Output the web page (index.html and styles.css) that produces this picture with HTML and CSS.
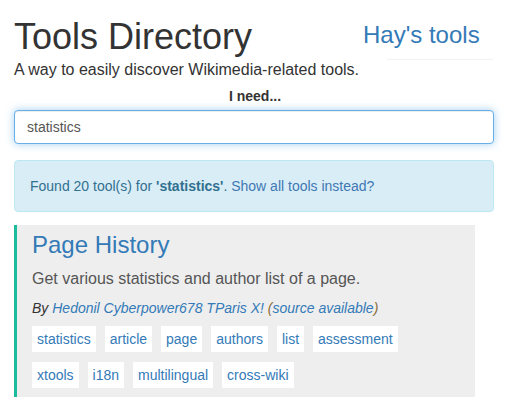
FILE: index.html
```html
<!DOCTYPE html>
<html lang="en">
<head>
<meta charset="utf-8">
<title>Tools Directory</title>
<link rel="stylesheet" href="styles.css">
</head>
<body>
<div class="page">
  <header class="masthead">
    <h1 class="title">Tools Directory</h1>
    <div class="side">
      <a class="side-link" href="#">Hay's tools</a>
      <div class="side-rule"></div>
    </div>
  </header>
  <p class="lead">A way to easily discover Wikimedia-related tools.</p>
  <label class="need" for="q">I need...</label>
  <input class="search" id="q" type="text" value="statistics">
  <div class="alert">Found 20 tool(s) for <strong>'statistics'</strong>. <a class="alert-link" href="#">Show all tools instead?</a></div>
  <div class="tool">
    <h3 class="tool-title"><a href="#">Page History</a></h3>
    <p class="tool-desc">Get various statistics and author list of a page.</p>
    <p class="tool-by">By <a href="#">Hedonil</a> <a href="#">Cyberpower678</a> <a href="#">TParis</a> <a href="#">X!</a> <span class="paren">(</span><a href="#">source available</a><span class="paren">)</span></p>
    <div class="tags">
      <a class="tag" href="#">statistics</a>
      <a class="tag" href="#">article</a>
      <a class="tag" href="#">page</a>
      <a class="tag" href="#">authors</a>
      <a class="tag" href="#">list</a>
      <a class="tag" href="#">assessment</a>
      <a class="tag" href="#">xtools</a>
      <a class="tag" href="#">i18n</a>
      <a class="tag" href="#">multilingual</a>
      <a class="tag" href="#">cross-wiki</a>
    </div>
  </div>
</div>
</body>
</html>
```

FILE: styles.css
```css
html, body {
  margin: 0;
  padding: 0;
  background: #fff;
}
body {
  font-family: "Liberation Sans", Arial, sans-serif;
  font-size: 14px;
  line-height: 20px;
  color: #333;
}
a {
  color: #337ab7;
  text-decoration: none;
}
.page {
  padding: 17px 13px 0 14px;
}
.masthead {
  display: flex;
  justify-content: space-between;
  align-items: flex-start;
}
.title {
  margin: 0;
  font-size: 36px;
  line-height: 40px;
  font-weight: 500;
  color: #333;
}
.side {
  margin: 5px -1px -3px 0;
  width: 132px;
}
.side-link {
  display: block;
  font-size: 24px;
  line-height: 26px;
}
.side-rule {
  margin: 11px 2px 0 24px;
  border-top: 1px solid #f2f2f2;
}
.lead {
  margin: 2px 0 0;
  font-size: 16px;
  line-height: 22px;
}
.need {
  display: block;
  margin: 4.5px 0 4.5px;
  text-align: center;
  font-weight: bold;
  padding-left: 2px;
}
.search {
  display: block;
  box-sizing: border-box;
  width: 100%;
  height: 34px;
  margin: 0;
  padding: 6px 12px;
  font-family: "Liberation Sans", Arial, sans-serif;
  font-size: 14px;
  line-height: 20px;
  color: #555;
  border: 1px solid #66afe9;
  border-radius: 4px;
  outline: 0;
  box-shadow: inset 0 1px 1px rgba(0,0,0,.075), 0 0 8px rgba(102,175,233,.6);
}
.alert {
  margin-top: 16px;
  padding: 15px;
  background: #d9edf7;
  border: 1px solid #bce8f1;
  border-radius: 4px;
  color: #31708f;
}
.alert-link {
  color: #3f78b3;
}
.tool {
  margin: 13px 19px 0 0;
  padding: 7px 15px 9px 15px;
  background: #eee;
  border-left: 3px solid #1abc9c;
}
.tool-title {
  margin: 0;
  font-size: 24px;
  line-height: 26px;
  font-weight: 500;
}
.tool-desc {
  margin: 9px 0 0;
  font-size: 16px;
  line-height: 23px;
  color: #555;
}
.tool-by {
  margin: 8px 0 0;
  font-style: italic;
}
.paren {
  color: #8a6d3b;
}
.tags {
  display: flex;
  flex-wrap: wrap;
  gap: 10px 9px;
  margin-top: 8px;
  padding-right: 40px;
}
.tag {
  display: block;
  padding: 3px 5px;
  background: #fff;
}
```
